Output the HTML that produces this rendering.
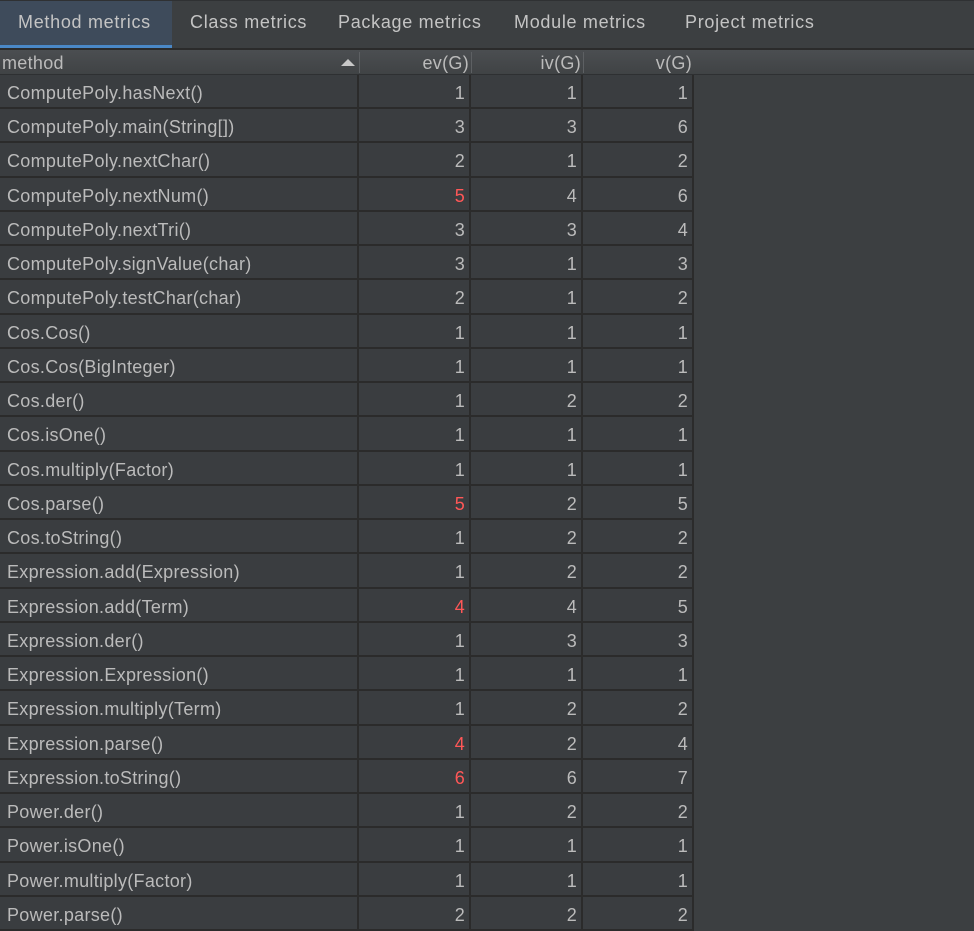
<!DOCTYPE html>
<html><head><meta charset="utf-8"><style>
*{margin:0;padding:0;box-sizing:border-box}
body{width:974px;height:931px;background:#3c3f41;font-family:"Liberation Sans","DejaVu Sans",sans-serif;color:#bbbbbb;position:relative;overflow:hidden;font-size:18px;letter-spacing:0.3px}
.abs{position:absolute}
.tabbar{left:0;top:0;width:974px;height:48px;background:#3c3f41;border-top:1px solid #2f3133}
.sel{left:0;top:1px;width:172px;height:47px;background:#3e4b5b;border-bottom:3px solid #4a88c7}
.tab{top:12px;font-size:18px;letter-spacing:0.7px;white-space:nowrap;color:#c4c4c4}
.sepbar{left:0;top:48px;width:974px;height:2px;background:#2b2b2b}
.hdr{left:0;top:50px;width:974px;height:25px;background:linear-gradient(#4b4e51,#404345);border-bottom:1px solid #2e3032}
.hs{top:52px;width:1px;height:21px;background:#5d6063}
.vl{top:75px;width:2px;height:856px;background:#2b2b2b}
.t{white-space:nowrap;position:absolute}
.n{text-align:right;width:40px}
.r{color:#ff5757}
.rw{position:absolute;left:0;width:694px;height:34.24px;border-bottom:2px solid #2b2b2b;background:#3a3d40}
.rw .t{top:8px}
.c0{left:7px}.c1{left:425px}.c2{left:537px}.c3{left:648px}
</style></head><body>
<div class="abs tabbar"></div>
<div class="abs sel"></div>
<div class="abs tab" style="left:18px">Method metrics</div>
<div class="abs tab" style="left:190px">Class metrics</div>
<div class="abs tab" style="left:338px">Package metrics</div>
<div class="abs tab" style="left:514px">Module metrics</div>
<div class="abs tab" style="left:685px">Project metrics</div>
<div class="abs sepbar"></div>
<div class="abs hdr"></div>
<div class="t" style="left:2px;top:53px">method</div>
<svg class="abs" style="left:340px;top:57px" width="16" height="10"><polygon points="1,9 8,2 15,9" fill="#c8c8c8"/></svg>
<div class="abs hs" style="left:359px"></div>
<div class="abs hs" style="left:471px"></div>
<div class="abs hs" style="left:583px"></div>
<div class="t n" style="left:409px;top:53px;width:60px">ev(G)</div>
<div class="t n" style="left:521px;top:53px;width:60px">iv(G)</div>
<div class="t n" style="left:632px;top:53px;width:60px">v(G)</div>

<div class="rw" style="top:75px"><div class="t c0">ComputePoly.hasNext()</div><div class="t n c1">1</div><div class="t n c2">1</div><div class="t n c3">1</div></div>
<div class="rw" style="top:109.24px"><div class="t c0">ComputePoly.main(String[])</div><div class="t n c1">3</div><div class="t n c2">3</div><div class="t n c3">6</div></div>
<div class="rw" style="top:143.48px"><div class="t c0">ComputePoly.nextChar()</div><div class="t n c1">2</div><div class="t n c2">1</div><div class="t n c3">2</div></div>
<div class="rw" style="top:177.72px"><div class="t c0">ComputePoly.nextNum()</div><div class="t n c1 r">5</div><div class="t n c2">4</div><div class="t n c3">6</div></div>
<div class="rw" style="top:211.96px"><div class="t c0">ComputePoly.nextTri()</div><div class="t n c1">3</div><div class="t n c2">3</div><div class="t n c3">4</div></div>
<div class="rw" style="top:246.2px"><div class="t c0">ComputePoly.signValue(char)</div><div class="t n c1">3</div><div class="t n c2">1</div><div class="t n c3">3</div></div>
<div class="rw" style="top:280.44px"><div class="t c0">ComputePoly.testChar(char)</div><div class="t n c1">2</div><div class="t n c2">1</div><div class="t n c3">2</div></div>
<div class="rw" style="top:314.68px"><div class="t c0">Cos.Cos()</div><div class="t n c1">1</div><div class="t n c2">1</div><div class="t n c3">1</div></div>
<div class="rw" style="top:348.92px"><div class="t c0">Cos.Cos(BigInteger)</div><div class="t n c1">1</div><div class="t n c2">1</div><div class="t n c3">1</div></div>
<div class="rw" style="top:383.16px"><div class="t c0">Cos.der()</div><div class="t n c1">1</div><div class="t n c2">2</div><div class="t n c3">2</div></div>
<div class="rw" style="top:417.4px"><div class="t c0">Cos.isOne()</div><div class="t n c1">1</div><div class="t n c2">1</div><div class="t n c3">1</div></div>
<div class="rw" style="top:451.64px"><div class="t c0">Cos.multiply(Factor)</div><div class="t n c1">1</div><div class="t n c2">1</div><div class="t n c3">1</div></div>
<div class="rw" style="top:485.88px"><div class="t c0">Cos.parse()</div><div class="t n c1 r">5</div><div class="t n c2">2</div><div class="t n c3">5</div></div>
<div class="rw" style="top:520.12px"><div class="t c0">Cos.toString()</div><div class="t n c1">1</div><div class="t n c2">2</div><div class="t n c3">2</div></div>
<div class="rw" style="top:554.36px"><div class="t c0">Expression.add(Expression)</div><div class="t n c1">1</div><div class="t n c2">2</div><div class="t n c3">2</div></div>
<div class="rw" style="top:588.6px"><div class="t c0">Expression.add(Term)</div><div class="t n c1 r">4</div><div class="t n c2">4</div><div class="t n c3">5</div></div>
<div class="rw" style="top:622.84px"><div class="t c0">Expression.der()</div><div class="t n c1">1</div><div class="t n c2">3</div><div class="t n c3">3</div></div>
<div class="rw" style="top:657.08px"><div class="t c0">Expression.Expression()</div><div class="t n c1">1</div><div class="t n c2">1</div><div class="t n c3">1</div></div>
<div class="rw" style="top:691.32px"><div class="t c0">Expression.multiply(Term)</div><div class="t n c1">1</div><div class="t n c2">2</div><div class="t n c3">2</div></div>
<div class="rw" style="top:725.56px"><div class="t c0">Expression.parse()</div><div class="t n c1 r">4</div><div class="t n c2">2</div><div class="t n c3">4</div></div>
<div class="rw" style="top:759.8px"><div class="t c0">Expression.toString()</div><div class="t n c1 r">6</div><div class="t n c2">6</div><div class="t n c3">7</div></div>
<div class="rw" style="top:794.04px"><div class="t c0">Power.der()</div><div class="t n c1">1</div><div class="t n c2">2</div><div class="t n c3">2</div></div>
<div class="rw" style="top:828.28px"><div class="t c0">Power.isOne()</div><div class="t n c1">1</div><div class="t n c2">1</div><div class="t n c3">1</div></div>
<div class="rw" style="top:862.52px"><div class="t c0">Power.multiply(Factor)</div><div class="t n c1">1</div><div class="t n c2">1</div><div class="t n c3">1</div></div>
<div class="rw" style="top:896.76px"><div class="t c0">Power.parse()</div><div class="t n c1">2</div><div class="t n c2">2</div><div class="t n c3">2</div></div>

<div class="abs vl" style="left:357px"></div>
<div class="abs vl" style="left:469px"></div>
<div class="abs vl" style="left:581px"></div>
<div class="abs vl" style="left:692px"></div>
</body></html>
